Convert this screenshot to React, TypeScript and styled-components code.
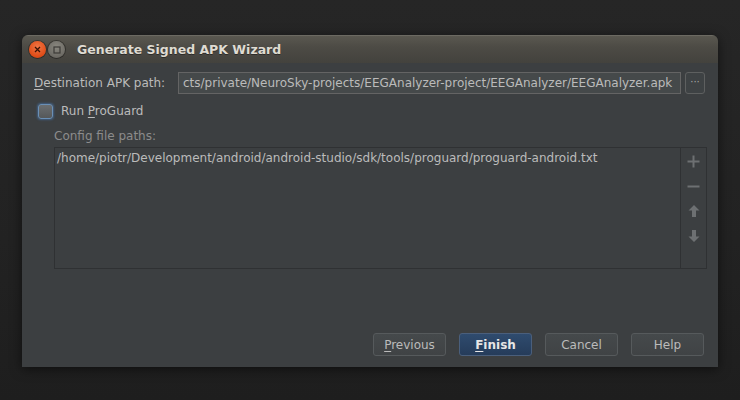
import React from "react";
import styled, { createGlobalStyle } from "styled-components";

const Global = createGlobalStyle`
  html, body { margin: 0; padding: 0; }
  body {
    width: 740px; height: 400px; overflow: hidden;
    background: linear-gradient(#262626, #222222 60%, #1e1e1e);
    font-family: "DejaVu Sans", "Liberation Sans", sans-serif;
  }
`;

const Page = styled.div`
  padding: 35px 22px 0 22px;
`;

const Window = styled.div`
  width: 696px;
  height: 332px;
  display: flex;
  flex-direction: column;
  border-radius: 6px 6px 0 0;
  box-shadow: 0 2px 12px rgba(0,0,0,0.55);
  overflow: hidden;
`;

const TitleBar = styled.div`
  height: 28px;
  flex: none;
  display: flex;
  align-items: center;
  padding-left: 7px;
  background: linear-gradient(#5a5850, #4d4b45 40%, #43423d);
  border-top: 1px solid #6c6a62;
  box-sizing: border-box;
`;

const WinBtn = styled.div<{ $close?: boolean }>`
  width: 17px; height: 17px;
  border-radius: 50%;
  margin-right: 2px;
  display: flex; align-items: center; justify-content: center;
  background: ${p => p.$close
    ? "radial-gradient(circle at 50% 35%, #f07746, #df4b16 70%, #b83a10)"
    : "radial-gradient(circle at 50% 35%, #8a8880, #6d6b65 70%, #5a5853)"};
  box-shadow: 0 0 0 1px rgba(0,0,0,0.35);
`;

const Title = styled.div`
  margin-left: 10px;
  color: #dfdbd2;
  font-family: "DejaVu Sans", sans-serif;
  font-weight: bold;
  font-size: 12.5px;
  text-shadow: 0 1px 0 rgba(0,0,0,0.4);
`;

const Body = styled.div`
  flex: 1;
  background: #3c3f41;
  padding: 9px 11px 11px 12px;
  display: flex;
  flex-direction: column;
  color: #bbbbbb;
  font-size: 12px;
`;

const PathRow = styled.div`
  display: flex;
  align-items: center;
  height: 22px;
  margin-right: 2px;
`;

const Label = styled.span`
  width: 144px;
  flex: none;
`;

const U = styled.span`
  text-decoration: underline;
  text-underline-offset: 2px;
`;

const TextField = styled.div`
  flex: 1;
  min-width: 0;
  height: 22px;
  box-sizing: border-box;
  border: 1px solid #646464;
  background: #45494a;
  padding: 0 4px 0 4px;
  display: flex;
  align-items: center;
  overflow: hidden;
  white-space: nowrap;
`;

const BrowseBtn = styled.div`
  width: 20px; height: 22px;
  margin-left: 4px;
  box-sizing: border-box;
  border: 1px solid #5e6060;
  border-radius: 3px;
  background: #3e4244;
  display: flex; align-items: center; justify-content: center;
  color: #a8a8a8;
  font-size: 10px;
  line-height: 1;
  padding-bottom: 3px;
`;

const CheckRow = styled.div`
  display: flex;
  align-items: center;
  margin-top: 9px;
  margin-left: 4px;
  height: 16px;
`;

const Check = styled.div`
  width: 13px; height: 13px;
  border-radius: 3px;
  border: 1px solid #6a8fb5;
  box-shadow: 0 0 2px 1px rgba(70,120,180,0.55);
  background: linear-gradient(#6b6e70, #55585a);
  margin-right: 8px;
`;

const SubLabel = styled.div`
  margin-left: 20px;
  margin-top: 10px;
  color: #8c8c8c;
`;

const ListBox = styled.div`
  margin-left: 20px;
  margin-top: 4px;
  height: 122px;
  box-sizing: border-box;
  border: 1px solid #2f3133;
  display: flex;
`;

const ListArea = styled.div`
  flex: 1;
  padding: 3px 2px 1px;
  color: #bbbbbb;
  border-right: 1px solid #2f3133;
`;

const ToolCol = styled.div`
  width: 25px;
  display: flex;
  flex-direction: column;
  align-items: center;
  padding-top: 6px;
  gap: 11px;
`;

const Tool = styled.div`
  width: 14px; height: 14px;
  display: flex; align-items: center; justify-content: center;
`;

const Spacer = styled.div`
  flex: 1;
`;

const ButtonRow = styled.div`
  display: flex;
  justify-content: flex-end;
  gap: 13px;
  padding-right: 3px;
`;

const Button = styled.div<{ $primary?: boolean }>`
  width: 73px;
  height: 23px;
  box-sizing: border-box;
  border-radius: 3px;
  border: 1px solid ${p => (p.$primary ? "#4a5f7c" : "#565a5c")};
  background: ${p => (p.$primary
    ? "linear-gradient(#2f4b6e, #253c5a)"
    : "linear-gradient(#45494b, #404345)")};
  color: ${p => (p.$primary ? "#e6e6e6" : "#bbbbbb")};
  font-weight: ${p => (p.$primary ? "bold" : "normal")};
  display: flex; align-items: center; justify-content: center;
`;

const iconColor = "#6d7072";

export default function App() {
  return (
    <>
      <Global />
      <Page>
        <Window>
          <TitleBar>
            <WinBtn $close>
              <svg width="7" height="7" viewBox="0 0 7 7">
                <path d="M1 1L6 6M6 1L1 6" stroke="#3a1205" strokeWidth="1.3" />
              </svg>
            </WinBtn>
            <WinBtn>
              <svg width="8" height="8" viewBox="0 0 8 8">
                <rect x="1" y="1" width="6" height="6" fill="none" stroke="#3c3b37" strokeWidth="1.2" />
              </svg>
            </WinBtn>
            <Title>Generate Signed APK Wizard</Title>
          </TitleBar>
          <Body>
            <PathRow>
              <Label><U>D</U>estination APK path:</Label>
              <TextField>cts/private/NeuroSky-projects/EEGAnalyzer-project/EEGAnalyzer/EEGAnalyzer.apk</TextField>
              <BrowseBtn>···</BrowseBtn>
            </PathRow>
            <CheckRow>
              <Check />
              <span>Run <U>P</U>roGuard</span>
            </CheckRow>
            <SubLabel>Config file paths:</SubLabel>
            <ListBox>
              <ListArea>/home/piotr/Development/android/android-studio/sdk/tools/proguard/proguard-android.txt</ListArea>
              <ToolCol>
                <Tool>
                  <svg width="13" height="13" viewBox="0 0 13 13">
                    <path d="M6.5 0.5V12.5M0.5 6.5H12.5" stroke={iconColor} strokeWidth="2" />
                  </svg>
                </Tool>
                <Tool>
                  <svg width="13" height="13" viewBox="0 0 13 13">
                    <path d="M0.5 6.5H12.5" stroke={iconColor} strokeWidth="2" />
                  </svg>
                </Tool>
                <Tool>
                  <svg width="12" height="12" viewBox="0 0 12 12">
                    <path d="M6 0L11.5 5.5H8V12H4V5.5H0.5Z" fill={iconColor} />
                  </svg>
                </Tool>
                <Tool>
                  <svg width="12" height="12" viewBox="0 0 12 12">
                    <path d="M6 12L11.5 6.5H8V0H4V6.5H0.5Z" fill={iconColor} />
                  </svg>
                </Tool>
              </ToolCol>
            </ListBox>
            <Spacer />
            <ButtonRow>
              <Button><span><U>P</U>revious</span></Button>
              <Button $primary><span><U>F</U>inish</span></Button>
              <Button>Cancel</Button>
              <Button>Help</Button>
            </ButtonRow>
          </Body>
        </Window>
      </Page>
    </>
  );
}
